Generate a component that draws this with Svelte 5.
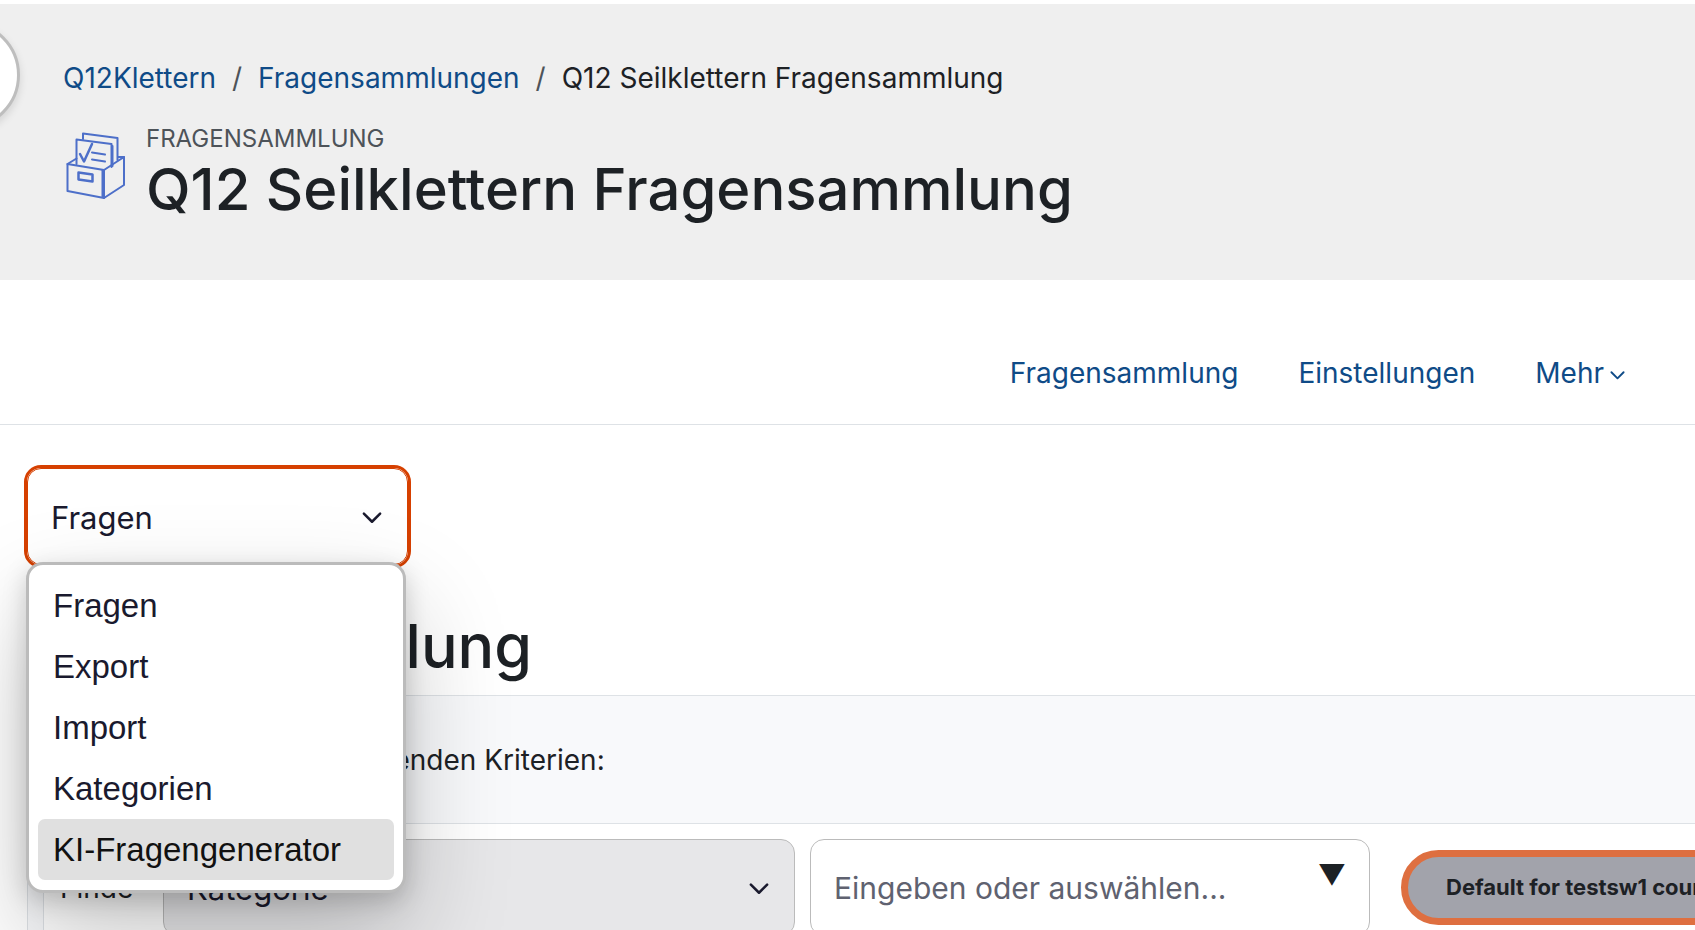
<script lang="ts">
  const crumbs = [
    { label: 'Q12Klettern', href: '#kurs' },
    { label: 'Fragensammlungen', href: '#sammlungen' }
  ];
  const title = 'Q12 Seilklettern Fragensammlung';
  const pages = ['Fragen', 'Export', 'Import', 'Kategorien', 'KI-Fragengenerator'];

  let page = $state('Fragen');
  let highlighted = $state('KI-Fragengenerator');
  let open = $state(true);
  let criteria = $state('');

  function choose(name: string) {
    page = name;
    open = false;
  }

  function handleKeydown(e: KeyboardEvent) {
    if (e.key === 'Escape') open = false;
  }
</script>

<svelte:window onkeydown={handleKeydown} />

{#snippet chevron(size: number, cls: string)}
  <svg class={cls} width={size} height={size} viewBox="0 0 16 16" aria-hidden="true">
    <path d="M1.5 4.5 8 11l6.5-6.5" fill="none" stroke="currentColor" stroke-width="2" stroke-linecap="round" stroke-linejoin="round" />
  </svg>
{/snippet}

<div class="page">
  <button class="drawer-toggle" aria-label="Blockleiste öffnen"></button>

  <header>
    <nav class="breadcrumb" aria-label="Navigationsleiste">
      {#each crumbs as crumb}
        <a href={crumb.href}>{crumb.label}</a>
        <span class="slash">/</span>
      {/each}
      <span>{title}</span>
    </nav>
    <div class="title">
      <svg class="icon" viewBox="0 0 60 68" aria-hidden="true">
        <g fill="none" stroke="#4d6fc9" stroke-width="2" stroke-linejoin="round" stroke-linecap="round">
          <path d="M17 7V1.500L51.500 6v22" />
          <path d="M10.500 32V7.500L45.500 12v23" />
          <path d="M46.500 14v20" />
          <path d="M14 22l4 7.500 8-17.500" stroke-width="2.500" />
          <path d="M26 20.500l13 2M26 27.500l13 2" />
          <path d="M1.500 32 38 38v28L1.500 59z" />
          <path d="M38 38l20-13v28L38 66z" />
          <path d="M1.500 32l9-5.500M52 25l6 0" />
          <path d="M36.500 38v27" />
          <path d="M12.500 40.500l14 2v7l-14-2z" stroke-width="2.500" />
        </g>
      </svg>
      <div>
        <div class="kind">Fragensammlung</div>
        <h1>{title}</h1>
      </div>
    </div>
  </header>

  <nav class="tabs" aria-label="Aktivität">
    <a href="#fragensammlung">Fragensammlung</a>
    <a href="#einstellungen">Einstellungen</a>
    <a href="#mehr">Mehr{@render chevron(15, 'more')}</a>
  </nav>

  <main>
    <div class="jump">
      <button class="field" aria-haspopup="listbox" aria-expanded={open} onclick={() => (open = !open)}>
        {page}
        {@render chevron(20, 'arrow')}
      </button>
      {#if open}
        <ul class="menu" role="listbox" aria-label="Bereich">
          {#each pages as name}
            <li role="presentation">
              <button
                role="option"
                aria-selected={page === name}
                class:active={highlighted === name}
                onmouseenter={() => (highlighted = name)}
                onclick={() => choose(name)}
              >{name}</button>
            </li>
          {/each}
        </ul>
      {/if}
    </div>

    <h2>Fragensammlung</h2>

    <section class="filters">
      <div class="match">
        <label for="join">Finde</label>
        <select id="join"><option>Alle</option></select>
        <span>der folgenden Kriterien:</span>
      </div>
      <div class="row">
        <label for="type">Finde</label>
        <div class="type">
          <select id="type" class="field"><option>Kategorie</option></select>
          {@render chevron(20, 'arrow')}
        </div>
        <div class="search">
          <input class="field" aria-label="Kategorie" placeholder="Eingeben oder auswählen..." bind:value={criteria} />
          <span class="triangle">▼</span>
        </div>
        <span class="badge">Default for testsw1 course</span>
      </div>
    </section>
  </main>
</div>

<style>
  :global(body) {
    margin: 0;
    background: #fff;
  }

  .page {
    box-sizing: border-box;
    position: relative;
    height: 100vh;
    overflow: hidden;
    padding-top: 4px;
    font-family: Inter, "Liberation Sans", sans-serif;
    font-size: 28px;
    line-height: 42px;
    color: #1d2125;
  }

  a {
    color: #0f4b87;
    text-decoration: none;
  }

  button,
  input,
  select {
    font: inherit;
    color: inherit;
  }

  .drawer-toggle {
    box-sizing: border-box;
    position: absolute;
    top: 21px;
    left: -88px;
    width: 108px;
    height: 108px;
    border: 3px solid #bebebe;
    border-radius: 50%;
    background: #fff;
    box-shadow: 0 4px 8px rgba(0, 0, 0, 0.12);
  }

  header {
    padding: 53px 63px 56px;
    background: #efefef;
  }

  .breadcrumb {
    display: flex;
    gap: 16px;
  }

  .slash {
    color: #4d5359;
  }

  .title {
    display: flex;
    gap: 20px;
    margin-top: 25px;
  }

  .icon {
    width: 60px;
    height: 68px;
    margin: 8px 0 0 3px;
  }

  .kind {
    font-size: 24px;
    line-height: 30px;
    text-transform: uppercase;
    color: #4d5359;
  }

  h1,
  h2 {
    margin: 0;
    font-size: 58px;
    line-height: 70px;
    font-weight: 500;
  }

  .tabs {
    display: flex;
    justify-content: flex-end;
    gap: 60px;
    padding: 72px 70px 30px;
    border-bottom: 1px solid #dee2e6;
  }

  .tabs :global(.more) {
    margin-left: 6px;
  }

  main {
    padding: 43px 0 0 27px;
  }

  .field {
    box-sizing: border-box;
    display: block;
    width: 100%;
    height: 97px;
    padding: 2px 23px 0;
    border: 1px solid #bbb;
    border-radius: 14px;
    background: #fff;
    font-size: 31px;
    text-align: left;
    appearance: none;
  }

  .jump {
    position: relative;
    width: 381px;
    color: #1a1a2e;
  }

  .jump .field {
    border-color: #d64000;
    outline: 3px solid #d64000;
  }

  .jump :global(.arrow),
  .type :global(.arrow) {
    position: absolute;
    top: 40px;
    right: 26px;
  }

  .menu {
    box-sizing: border-box;
    position: absolute;
    z-index: 1;
    top: 94px;
    left: -1px;
    right: 2px;
    margin: 0;
    padding: 10px 9px;
    list-style: none;
    border: 3px solid #bbb;
    border-radius: 17px;
    background: #fff;
    box-shadow: 0 48px 104px rgba(0, 0, 0, 0.22), 0 8px 24px rgba(0, 0, 0, 0.18);
    font-family: "Liberation Sans", Arial, sans-serif;
    font-size: 33px;
    line-height: 41px;
  }

  .menu button {
    display: block;
    width: 100%;
    padding: 10px 15px;
    border: 0;
    border-radius: 7px;
    background: none;
    text-align: left;
  }

  .menu .active {
    background: #e0e0e0;
    color: #111;
  }

  h2 {
    margin: 44px 0 12px;
    font-size: 61px;
    line-height: 74px;
  }

  .filters {
    border: 1px solid #dee2e6;
    border-right: 0;
    border-radius: 14px 0 0 0;
    background: #f8f9fb;
  }

  .match {
    display: flex;
    gap: 16px;
    padding: 43px 32px 42px;
  }

  .match select {
    width: 126px;
    border: 1px solid #bbb;
    border-radius: 14px;
    background: #fff;
  }

  /* the badge may run past the last column */
  .row {
    display: grid;
    grid-template-columns: 103px minmax(0, 632fr) minmax(0, 560fr) minmax(0, 340fr);
    align-items: center;
    margin-left: 15px;
    padding: 15px 0 15px 16px;
    border: 1px solid #dee2e6;
    border-right: 0;
    background: #fff;
  }

  .type {
    position: relative;
    color: #1a1a2e;
  }

  .type .field {
    background: #e7e7e9;
  }

  .search {
    position: relative;
    margin-left: 15px;
    margin-right: -15px;
  }

  .search .field {
    padding-top: 0;
    font-size: 30px;
  }

  .search .field::placeholder {
    color: #5f6270;
    opacity: 1;
  }

  .triangle {
    position: absolute;
    top: 15px;
    right: 24px;
  }

  .badge {
    justify-self: start;
    margin-left: 46px;
    padding: 17px 38px;
    border: 7px solid #de6f40;
    border-radius: 38px;
    background: #a2a3ab;
    font-size: 22px;
    line-height: 27px;
    font-weight: 700;
    white-space: nowrap;
  }
</style>
